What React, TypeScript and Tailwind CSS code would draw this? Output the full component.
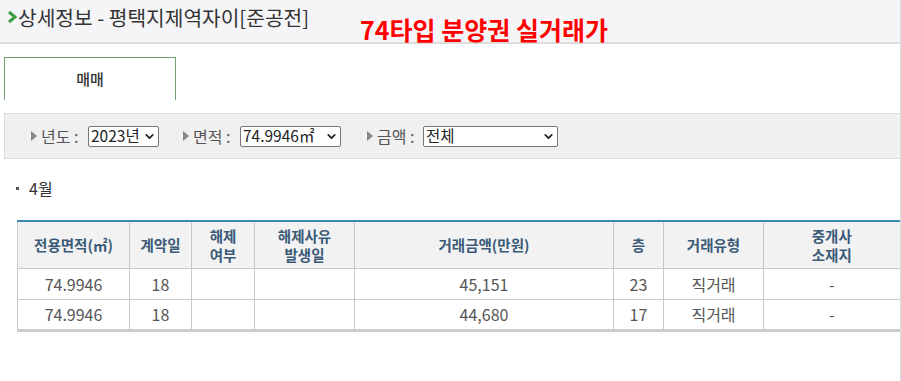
import { ChevronDown } from "lucide-react";

const rows = [
  { area: "74.9946", day: "18", price: "45,151", floor: "23", type: "직거래", loc: "-" },
  { area: "74.9946", day: "18", price: "44,680", floor: "17", type: "직거래", loc: "-" },
];

function Tri() {
  return (
    <svg width="6" height="10" viewBox="0 0 6 10" className="mr-[4px]">
      <path d="M0 0 L6 5 L0 10 Z" fill="#888" />
    </svg>
  );
}

function Select({ value, width }: { value: string; width: string }) {
  return (
    <div
      className={`${width} h-[21px] flex items-center justify-between bg-white border border-[#767676] rounded-[2px] pl-[2px] pr-[2px] text-[15.5px] text-[#222]`}
    >
      <span className="leading-none whitespace-nowrap">{value}</span>
      <ChevronDown size={13} strokeWidth={3.2} className="text-[#222] shrink-0" />
    </div>
  );
}

export default function App() {
  const font = { fontFamily: '"Noto Sans CJK KR", "Noto Sans", sans-serif' };
  return (
    <div className="w-[901px] h-[381px] bg-white border-r border-[#d6dee5] overflow-hidden" style={font}>
      <div className="h-[44px] bg-[#f5f5f7] border-b-2 border-[#dcdcdc] flex items-start pl-[7px]">
        <div className="flex items-center mt-[4px]">
          <svg width="11" height="14" viewBox="0 0 11 14">
            <path d="M2 2 L8 7 L2 12" stroke="#3aa040" strokeWidth="3" fill="none" />
          </svg>
          <span className="text-[20.3px] text-[#333] leading-[26px]">상세정보 - 평택지제역자이[준공전]</span>
        </div>
        <span className="ml-[51px] mt-[14px] text-[25px] font-bold text-[#ff0000] leading-[30px]">
          74타입 분양권 실거래가
        </span>
      </div>

      <div className="pl-[4px] pt-[13px]">
        <div className="w-[172px] h-[43px] border border-b-0 border-[#6f9e6f] flex items-center justify-center text-[15px] font-medium text-[#333]">
          매매
        </div>
      </div>

      <div className="ml-[4px] mt-[13px] h-[46px] bg-[#f0f0f0] border border-[#dddddd] border-r-0 flex items-center pl-[26px] text-[16px] text-[#555]">
        <Tri />
        <span className="w-[47px]">년도 :</span>
        <Select value="2023년" width="w-[71px]" />
        <span className="w-[24px]" />
        <Tri />
        <span className="w-[47px]">면적 :</span>
        <Select value="74.9946㎡" width="w-[101px]" />
        <span className="w-[26px]" />
        <Tri />
        <span className="w-[46px]">금액 :</span>
        <Select value="전체" width="w-[135px]" />
      </div>

      <div className="flex items-center mt-[18px] pl-[16px] h-[22px] text-[16px] text-[#333]">
        <span className="w-[3px] h-[3px] bg-[#555] mr-[10px]" />
        4월
      </div>

      <div className="ml-[17px] mt-[21px]">
        <table className="w-[882px] border-collapse table-fixed border-t-2 border-[#3f86b9] border-b-[3px] border-b-[#cccccc] text-[16px]">
          <colgroup>
            <col className="w-[112px]" />
            <col className="w-[62px]" />
            <col className="w-[63px]" />
            <col className="w-[100px]" />
            <col className="w-[259px]" />
            <col className="w-[50px]" />
            <col className="w-[100px]" />
            <col className="w-[136px]" />
          </colgroup>
          <thead>
            <tr className="h-[47px] bg-[#f2f2f2] text-[14.5px] font-bold text-[#3a5a78] leading-[19px]">
              <th className="border border-[#c8c8c8] border-t-0 font-bold">전용면적(㎡)</th>
              <th className="border border-[#c8c8c8] border-t-0 font-bold">계약일</th>
              <th className="border border-[#c8c8c8] border-t-0 font-bold">해제<br />여부</th>
              <th className="border border-[#c8c8c8] border-t-0 font-bold">해제사유<br />발생일</th>
              <th className="border border-[#c8c8c8] border-t-0 font-bold">거래금액(만원)</th>
              <th className="border border-[#c8c8c8] border-t-0 font-bold">층</th>
              <th className="border border-[#c8c8c8] border-t-0 font-bold">거래유형</th>
              <th className="border border-[#c8c8c8] border-t-0 border-r-0 font-bold">중개사<br />소재지</th>
            </tr>
          </thead>
          <tbody>
            {rows.map((r, i) => (
              <tr key={i} className="h-[31px] text-[#555] text-center">
                <td className="border border-[#c8c8c8]">{r.area}</td>
                <td className="border border-[#c8c8c8]">{r.day}</td>
                <td className="border border-[#c8c8c8]" />
                <td className="border border-[#c8c8c8]" />
                <td className="border border-[#c8c8c8]">{r.price}</td>
                <td className="border border-[#c8c8c8]">{r.floor}</td>
                <td className="border border-[#c8c8c8]">{r.type}</td>
                <td className="border border-[#c8c8c8] border-r-0">{r.loc}</td>
              </tr>
            ))}
          </tbody>
        </table>
      </div>
    </div>
  );
}
